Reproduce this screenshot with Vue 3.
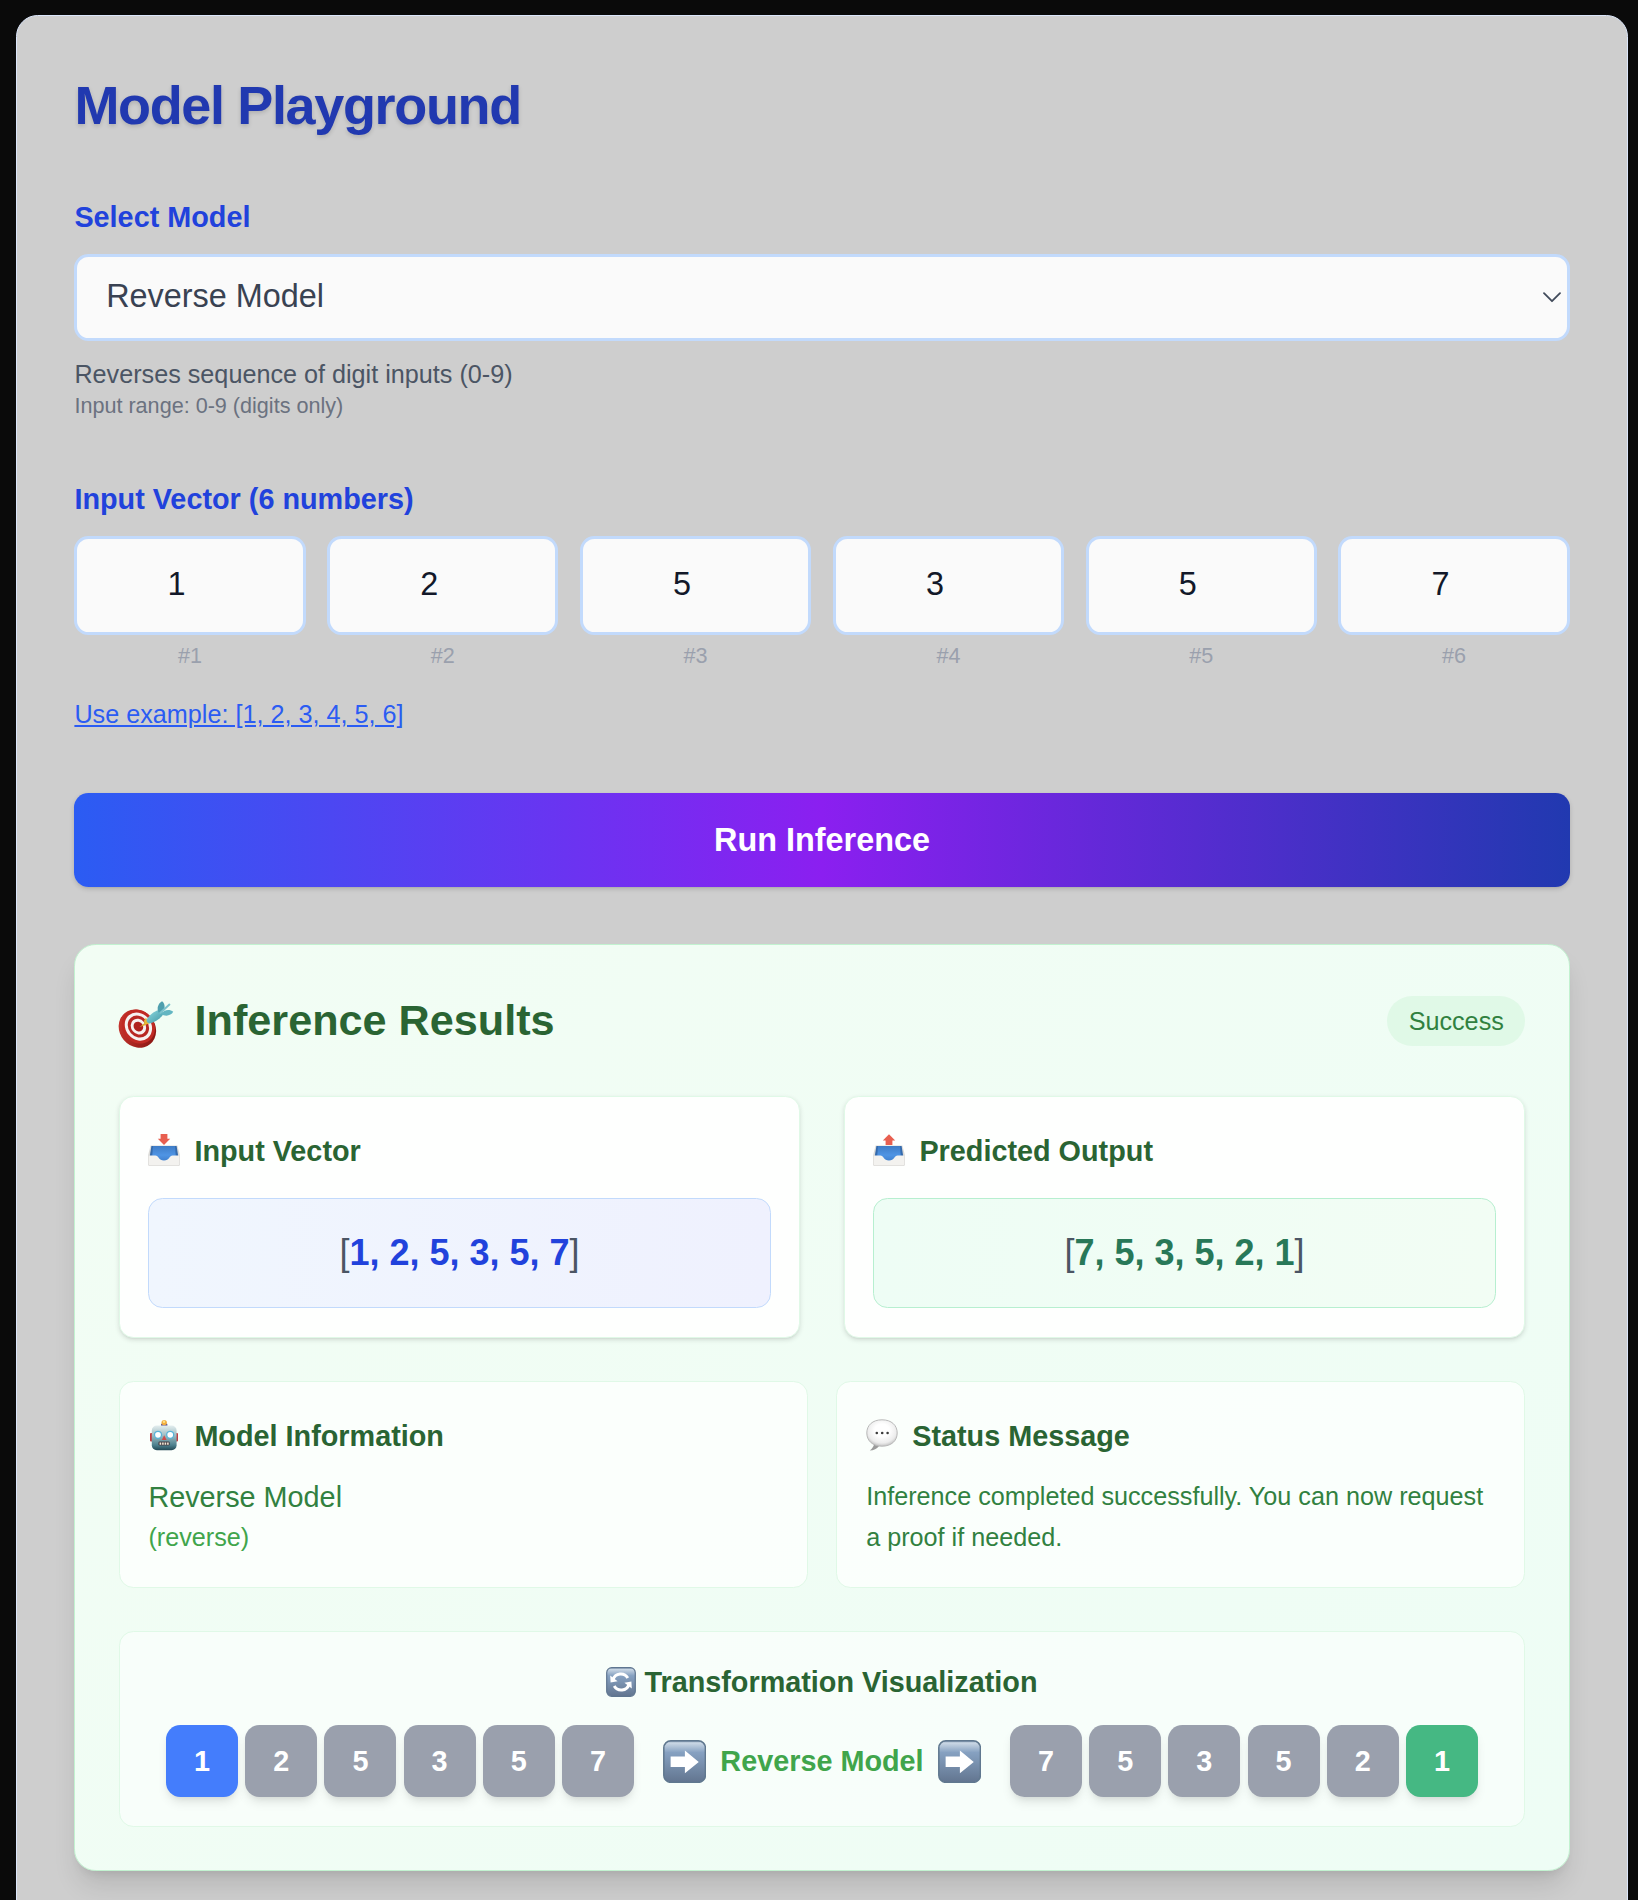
<script setup>
import { ref } from 'vue'

const inputs = ref([1, 2, 5, 3, 5, 7])
const output = ref([7, 5, 3, 5, 2, 1])
</script>

<template>
  <div class="page">
    <main class="panel">
      <h1 class="title">Model Playground</h1>

      <section class="block">
        <label class="label">Select Model</label>
        <div class="select">
          <span>Reverse Model</span>
          <svg class="chevron" width="18" height="11" viewBox="0 0 18 11" fill="none" stroke="#414b5b" stroke-width="1.8" stroke-linecap="round" stroke-linejoin="round">
            <path d="M1 1.2 9 9.2 17 1.2" />
          </svg>
        </div>
        <p class="desc">Reverses sequence of digit inputs (0-9)</p>
        <p class="range">Input range: 0-9 (digits only)</p>
      </section>

      <section class="block">
        <label class="label">Input Vector (6 numbers)</label>
        <div class="inputs">
          <div v-for="(n, i) in inputs" :key="i" class="slot">
            <div class="number">{{ n }}</div>
            <div class="index">#{{ i + 1 }}</div>
          </div>
        </div>
        <div class="example"><a>Use example: [1, 2, 3, 4, 5, 6]</a></div>
      </section>

      <button class="run">Run Inference</button>

      <section class="results">
        <header class="results-head">
          <svg class="target" width="56" height="48" viewBox="0 0 56 48">
            <defs>
              <linearGradient id="rim" x1="0" y1="0" x2="0.6" y2="1">
                <stop offset="0" stop-color="#cf3a32" />
                <stop offset="1" stop-color="#8e1814" />
              </linearGradient>
              <linearGradient id="dart" x1="0" y1="0" x2="1" y2="1">
                <stop offset="0" stop-color="#8fdbe2" />
                <stop offset="1" stop-color="#3f95a3" />
              </linearGradient>
            </defs>
            <ellipse cx="19.4" cy="28.6" rx="17.8" ry="20" transform="rotate(-40 19.4 28.6)" fill="url(#rim)" />
            <g transform="rotate(-40 20.4 26.6)">
              <ellipse cx="20.4" cy="26.6" rx="15.8" ry="17.8" fill="#c02a24" />
              <ellipse cx="20.4" cy="26.6" rx="12.8" ry="14.8" fill="#f6f1f0" />
              <ellipse cx="20.4" cy="26.6" rx="10" ry="11.6" fill="#b82722" />
              <ellipse cx="20.4" cy="26.6" rx="7.2" ry="8.4" fill="#f6f1f0" />
              <ellipse cx="20.4" cy="26.6" rx="4.6" ry="5.2" fill="#b0211d" />
            </g>
            <path d="M21.5 27 30 20.5 28 25Z" fill="#d9a82c" />
            <path d="M28 17.8 31.4 23.4 26.6 24.8 26 20.5Z" fill="#e5b93a" />
            <path d="M28.6 19.8C31.6 14.4 36.8 11 42 9.6L45.6 13.4C43.2 18 38 22 31.8 23.4 30 23.6 28.2 21.8 28.6 19.8Z" fill="url(#dart)" />
            <path d="M40.8 12.8C38.2 8.4 40.2 3.4 44 1.2 46.8 3 47 6.8 46.2 10.6Z" fill="#4e9fae" />
            <path d="M43 14C46 9.4 52 9.2 55.2 11.8 53.2 15.8 47.4 17 43 14Z" fill="#63b6c2" />
            <path d="M42.5 12.8 51.4 4.6" stroke="#7cc3cd" stroke-width="2" stroke-linecap="round" />
          </svg>
          <h2>Inference Results</h2>
          <span class="badge">Success</span>
        </header>

        <div class="vectors">
          <div class="card">
            <h3 class="head">
              <svg class="icon" width="32" height="32" viewBox="0 0 32 32">
                <defs>
                  <linearGradient id="tray" x1="0" y1="0" x2="0" y2="1">
                    <stop offset="0" stop-color="#3e7cc6" />
                    <stop offset="0.6" stop-color="#4f94e4" />
                    <stop offset="1" stop-color="#3f7fcd" />
                  </linearGradient>
                </defs>
                <path d="M2.6 11.4H29.4L31.9 21V30.4Q31.9 32 30.3 32H1.7Q.1 32 .1 30.4V21Z" fill="#dcdbd8" />
                <path d="M3.4 12H28.6L30.2 22 22 27.4H10L1.8 22Z" fill="#346aac" />
                <path d="M5 12H27L27.8 22.6 21 27.2H11L4.2 22.6Z" fill="url(#tray)" />
                <path d="M.8 21.4H7.4C10.6 21.4 10.6 26.4 16 26.4S21.4 21.4 24.6 21.4H31.2V30.2Q31.2 31.2 30.2 31.2H1.8Q.8 31.2 .8 30.2Z" fill="#f3f2ef" />
                <path d="M12.6 0H19.4V4.8H22.2L16 11 9.8 4.8H12.6Z" fill="#e85f50" />
              </svg>
              Input Vector
            </h3>
            <div class="vector blue">[<b>{{ inputs.join(', ') }}</b>]</div>
          </div>
          <div class="card">
            <h3 class="head">
              <svg class="icon" width="32" height="32" viewBox="0 0 32 32">
                <path d="M2.6 11.4H29.4L31.9 21V30.4Q31.9 32 30.3 32H1.7Q.1 32 .1 30.4V21Z" fill="#dcdbd8" />
                <path d="M3.4 12H28.6L30.2 22 22 27.4H10L1.8 22Z" fill="#346aac" />
                <path d="M5 12H27L27.8 22.6 21 27.2H11L4.2 22.6Z" fill="url(#tray)" />
                <path d="M.8 21.4H7.4C10.6 21.4 10.6 26.4 16 26.4S21.4 21.4 24.6 21.4H31.2V30.2Q31.2 31.2 30.2 31.2H1.8Q.8 31.2 .8 30.2Z" fill="#f3f2ef" />
                <path d="M12.6 11H19.4V6.4H22.2L16 .2 9.8 6.4H12.6Z" fill="#e85f50" />
              </svg>
              Predicted Output
            </h3>
            <div class="vector green">[<b>{{ output.join(', ') }}</b>]</div>
          </div>
        </div>

        <div class="infos">
          <div class="card soft">
            <h3 class="head">
              <svg class="icon" width="32" height="32" viewBox="0 0 32 32">
                <defs>
                  <linearGradient id="bot" x1="0" y1="0" x2="0" y2="1">
                    <stop offset="0" stop-color="#e3eeee" />
                    <stop offset="0.4" stop-color="#9dbcc3" />
                    <stop offset="0.8" stop-color="#4b7f8c" />
                    <stop offset="1" stop-color="#234854" />
                  </linearGradient>
                </defs>
                <rect x="2" y="14" width="4" height="8.5" rx="1" fill="#bd3d42" />
                <rect x="26" y="14" width="4" height="8.5" rx="1" fill="#bd3d42" />
                <rect x="13" y="4.6" width="6.4" height="3.4" rx="1.2" fill="#5c4a86" />
                <circle cx="16.2" cy="3.6" r="2.7" fill="#f2ae3d" />
                <circle cx="16" cy="2.8" r="1.2" fill="#fbe08a" />
                <rect x="3.8" y="6.6" width="24.8" height="24.6" rx="5" fill="url(#bot)" />
                <circle cx="10" cy="15.8" r="3.5" fill="#fff" stroke="#58b3d8" stroke-width="1.3" />
                <circle cx="22.2" cy="15.8" r="3.5" fill="#fff" stroke="#58b3d8" stroke-width="1.3" />
                <path d="M16.2 16.2 18.6 21H13.8Z" fill="#d04a48" />
                <rect x="10.4" y="22.6" width="11.4" height="4" rx="1.4" fill="#473f45" />
                <path d="M11.6 24.6H20.8" stroke="#f3e9d6" stroke-width="2.2" stroke-dasharray="1.6 .9" />
              </svg>
              Model Information
            </h3>
            <p class="name">Reverse Model</p>
            <p class="slug">(reverse)</p>
          </div>
          <div class="card soft">
            <h3 class="head">
              <svg class="icon" width="32" height="32" viewBox="0 0 32 32">
                <defs>
                  <radialGradient id="bub" cx="0.5" cy="0.4" r="0.6">
                    <stop offset="0.4" stop-color="#fff" />
                    <stop offset="0.8" stop-color="#ececec" />
                    <stop offset="1" stop-color="#c4c4c4" />
                  </radialGradient>
                </defs>
                <path d="M8.2 24.6Q7.6 28.8 3.8 31.6 9.6 31.6 13.6 26.6Z" fill="#9b9b9b" />
                <path d="M16 .8C25.6.8 31.2 6.4 31.2 14S25.6 27.2 16 27.2 .8 21.6.8 14 6.4.8 16 .8Z" fill="url(#bub)" stroke="#b9b9b9" stroke-width="1" />
                <g fill="#3c3c3c"><circle cx="10.8" cy="14" r="1.3" /><circle cx="16.2" cy="14" r="1.3" /><circle cx="21.6" cy="14" r="1.3" /></g>
              </svg>
              Status Message
            </h3>
            <p class="status">Inference completed successfully. You can now request a proof if needed.</p>
          </div>
        </div>

        <div class="card soft viz">
          <h3 class="viz-head">
            <svg width="30" height="30" viewBox="0 0 30 30">
              <defs>
                <linearGradient id="key" x1="0" y1="0" x2="0" y2="1">
                  <stop offset="0" stop-color="#7089a5" />
                  <stop offset="0.05" stop-color="#cbd8e5" />
                  <stop offset="0.28" stop-color="#86a1c1" />
                  <stop offset="1" stop-color="#62758f" />
                </linearGradient>
              </defs>
              <rect x=".7" y=".7" width="28.6" height="28.6" rx="5" fill="url(#key)" stroke="#5f7690" stroke-width="1.2" />
              <g fill="none" stroke="#fff" stroke-width="3">
                <path d="M7 12.6A8.2 8.2 0 0 1 21.8 11" />
                <path d="M23 17.4A8.2 8.2 0 0 1 8.2 19" />
              </g>
              <path d="M4.2 8.4 4.6 15.4 11.6 14.2ZM25.8 21.6 25.4 14.6 18.4 15.8Z" fill="#fff" />
            </svg>
            Transformation Visualization
          </h3>
          <div class="flow">
            <div class="cells">
              <span v-for="(n, i) in inputs" :key="i" class="cell" :class="{ first: i === 0 }">{{ n }}</span>
            </div>
            <div class="via">
              <svg width="43.2" height="43.2" viewBox="0 0 43 43">
                <rect x=".8" y=".8" width="41.4" height="41.4" rx="7" fill="url(#key)" stroke="#60788f" stroke-width="1.5" />
                <path d="M7.6 16.4H21.8V10.4L35.6 21.8 21.8 33.2V27H7.6Z" fill="#fff" />
              </svg>
              <span>Reverse Model</span>
              <svg width="43.2" height="43.2" viewBox="0 0 43 43">
                <rect x=".8" y=".8" width="41.4" height="41.4" rx="7" fill="url(#key)" stroke="#60788f" stroke-width="1.5" />
                <path d="M7.6 16.4H21.8V10.4L35.6 21.8 21.8 33.2V27H7.6Z" fill="#fff" />
              </svg>
            </div>
            <div class="cells">
              <span v-for="(n, i) in output" :key="i" class="cell" :class="{ last: i === output.length - 1 }">{{ n }}</span>
            </div>
          </div>
        </div>
      </section>
    </main>
  </div>
</template>

<style>
body {
  margin: 0;
  background: #0a0a0a;
}
</style>

<style scoped>
* {
  box-sizing: border-box;
  margin: 0;
}
.page {
  height: 1900px;
  overflow: hidden;
  padding: 15px 10px 0 16px;
  background: #0a0a0a;
  font-family: "Liberation Sans", Arial, sans-serif;
  font-size: 28.8px;
  line-height: 43.2px;
}
.panel {
  height: 2000px;
  padding: 56.6px 57.4px;
  border: 1px solid #dbe6fb;
  border-radius: 21.6px;
  background: #cecece;
}
.title {
  margin-bottom: 58.6px;
  font-size: 54px;
  line-height: 64.8px;
  letter-spacing: -1.35px;
  color: #2139b0;
  text-shadow: 0 2px 4px rgba(0, 0, 0, 0.15);
}
.block {
  margin-bottom: 57.6px;
}
.label {
  display: block;
  margin-bottom: 14.4px;
  font-weight: 700;
  color: #2142dc;
}
.select {
  display: flex;
  align-items: center;
  justify-content: space-between;
  height: 87px;
  padding: 0 6px 0 28.8px;
  border: 3px solid #c2dafc;
  border-radius: 14.4px;
  background: #fafafa;
  color: #394252;
  font-size: 32.4px;
}
.desc {
  margin-top: 15px;
  font-size: 25.2px;
  line-height: 36px;
  color: #4b5564;
}
.range {
  font-size: 21.6px;
  line-height: 28.8px;
  color: #6b7280;
}
.inputs {
  display: grid;
  grid-template-columns: repeat(6, 1fr);
  gap: 21.6px;
}
.number {
  display: flex;
  align-items: center;
  justify-content: center;
  height: 99px;
  padding-right: 27px;
  border: 3px solid #c2dafc;
  border-radius: 14.4px;
  background: #fafafa;
  color: #121829;
  font-size: 32.4px;
}
.index {
  margin-top: 7.2px;
  font-size: 21.6px;
  line-height: 28.8px;
  text-align: center;
  color: #9aa0ad;
}
.example {
  margin-top: 21.6px;
}
.example a {
  font-size: 25.2px;
  line-height: 36px;
  color: #2b5cf3;
  text-decoration: underline;
}
.run {
  display: block;
  width: 100%;
  height: 93.6px;
  padding: 1px 0 0;
  border: 0;
  border-radius: 14.4px;
  background: linear-gradient(90deg, #2b5cf3, #8b1ff0 50%, #2139b0);
  box-shadow: 0 2px 5px rgba(0, 0, 0, 0.14), 0 2px 3px -2px rgba(0, 0, 0, 0.1);
  color: #fff;
  font: 700 32.4px/50.4px "Liberation Sans", Arial, sans-serif;
}
.results {
  margin-top: 57.6px;
  padding: 43.2px;
  border: 1px solid #c2f2d0;
  border-radius: 21.6px;
  background: linear-gradient(135deg, #f2fdf4, #eefdf5);
  box-shadow: 0 18px 27px -5px rgba(0, 0, 0, 0.12), 0 7px 11px -7px rgba(0, 0, 0, 0.12);
}
.results-head {
  display: flex;
  align-items: center;
  height: 64.8px;
  margin-bottom: 43.2px;
}
.target {
  margin: 6px 20.6px 0 -0.6px;
}
.results-head h2 {
  font-size: 43.2px;
  line-height: 57.6px;
  color: #2a6433;
}
.badge {
  margin-left: auto;
  padding: 7.2px 21.6px;
  border-radius: 26px;
  background: #e0f9e7;
  color: #318140;
  font-size: 25.2px;
  line-height: 36px;
}
.vectors {
  display: grid;
  grid-template-columns: 1fr 1fr;
  gap: 43.2px;
}
.infos {
  display: grid;
  grid-template-columns: 1fr 1fr;
  gap: 28.8px;
  margin: 43.2px 0;
}
.card {
  padding: 28.8px;
  border: 1px solid #e0f9e7;
  border-radius: 14.4px;
  background: #fefffe;
  box-shadow: 0 2px 5px rgba(0, 0, 0, 0.12), 0 2px 3px -2px rgba(0, 0, 0, 0.1);
}
.card.soft {
  background: rgba(255, 255, 255, 0.7);
  box-shadow: none;
}
.head {
  display: flex;
  align-items: center;
  height: 50.4px;
  padding-top: 1px;
  font-size: 28.8px;
  color: #2a6433;
}
.icon {
  margin: -3px 14px 0 0;
}
.vector {
  margin-top: 21.6px;
  padding: 28.8px;
  border: 1px solid #c2dafc;
  border-radius: 14.4px;
  font-size: 36px;
  line-height: 50.4px;
  text-align: center;
  color: #4b5564;
}
.vector.blue {
  background: linear-gradient(90deg, #f0f6fe, #eff1fe);
}
.vector.blue b {
  color: #2142dc;
}
.vector.green {
  border-color: #b7efd0;
  background: linear-gradient(90deg, #eefdf5, #f2fdf4);
}
.vector.green b {
  color: #287858;
}
.name {
  margin-top: 14.8px;
  line-height: 43.2px;
  color: #318140;
}
.slug {
  font-size: 25.2px;
  line-height: 36px;
  color: #40a54b;
}
.status {
  margin-top: 14.8px;
  font-size: 25.2px;
  line-height: 41px;
  color: #318140;
}
.card.viz {
  background: rgba(255, 255, 255, 0.5);
}
.viz-head {
  display: flex;
  align-items: center;
  justify-content: center;
  gap: 8px;
  margin-bottom: 21.2px;
  font-size: 28.8px;
  color: #2a6433;
}
.flow {
  display: flex;
  align-items: center;
  justify-content: center;
  gap: 28.8px;
}
.cells {
  display: flex;
  gap: 7.2px;
}
.cell {
  width: 72px;
  height: 72px;
  border-radius: 14.4px;
  background: #9aa0ad;
  box-shadow: 0 7px 11px -2px rgba(0, 0, 0, 0.1), 0 4px 7px -4px rgba(0, 0, 0, 0.1);
  color: #fff;
  font-weight: 700;
  line-height: 72px;
  text-align: center;
}
.cell.first {
  background: #447dfc;
}
.cell.last {
  background: #45b883;
}
.via {
  display: flex;
  align-items: center;
  gap: 14.4px;
  font-weight: 700;
  color: #40a54b;
}
</style>
